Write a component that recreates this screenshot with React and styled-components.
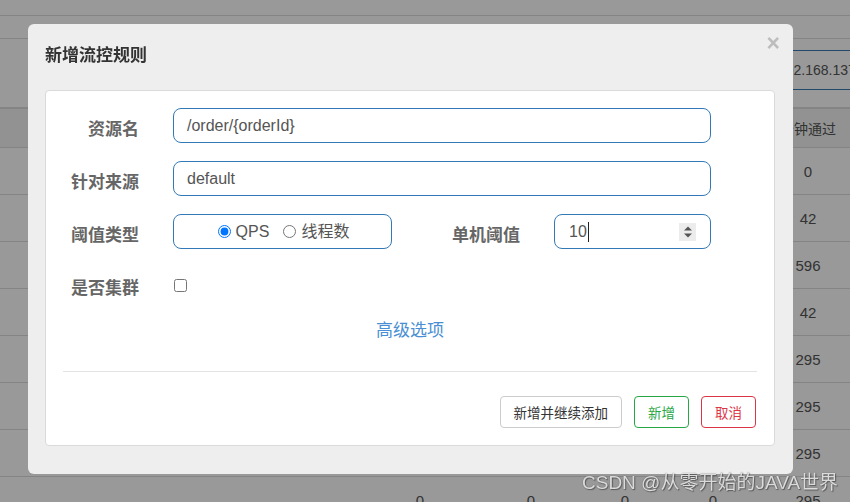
import React from 'react';
import styled, {createGlobalStyle} from 'styled-components';

const GlobalStyle = createGlobalStyle`
  * {
    box-sizing: border-box;
  }
  body {
    margin: 0;
    width: 850px;
    height: 502px;
    overflow: hidden;
    background: #fff;
    font-family: "Liberation Sans", "Noto Sans CJK SC", sans-serif;
    color: #333;
  }
`;

const rightValues = ['0', '42', '596', '42', '295', '295', '295', '295', '295'];

export default function App() {
  return (
    <>
      <GlobalStyle />
      <Page>
        <TopStrip />
        <SubStrip />
        <Toolbar>
          <HostBox>192.168.137.1:8720</HostBox>
        </Toolbar>
        <Table>
          <HeadRow>
            <Cell />
            <Cell>通过QPS</Cell>
            <Cell>拒绝QPS</Cell>
            <Cell>并发数</Cell>
            <Cell>平均RT</Cell>
            <Cell>分钟通过</Cell>
          </HeadRow>
          {rightValues.map((v, i) => (
            <Row key={i}>
              <Cell />
              <Cell>0</Cell>
              <Cell>0</Cell>
              <Cell>0</Cell>
              <Cell>0</Cell>
              <Cell>{v}</Cell>
            </Row>
          ))}
        </Table>
      </Page>

      <Backdrop />

      <Modal>
        <ModalHeader>
          <Title>新增流控规则</Title>
          <CloseButton>×</CloseButton>
        </ModalHeader>
        <Panel>
          <FormRow>
            <FieldLabel>资源名</FieldLabel>
            <TextInput defaultValue="/order/{orderId}" />
          </FormRow>
          <FormRow>
            <FieldLabel>针对来源</FieldLabel>
            <TextInput defaultValue="default" />
          </FormRow>
          <FormRow>
            <FieldLabel>阈值类型</FieldLabel>
            <RadioBox>
              <RadioItem>
                <input type="radio" name="grade" defaultChecked />
                QPS
              </RadioItem>
              <RadioItem>
                <input type="radio" name="grade" />
                线程数
              </RadioItem>
            </RadioBox>
            <FieldLabel $offset>单机阈值</FieldLabel>
            <NumberBox>
              <span>10</span>
              <Caret />
              <Spinner>
                <svg width="10" height="14" viewBox="0 0 10 14">
                  <path d="M1 5.5 L5 1.5 L9 5.5 Z" fill="#555" />
                  <path d="M1 8.5 L5 12.5 L9 8.5 Z" fill="#555" />
                </svg>
              </Spinner>
            </NumberBox>
          </FormRow>
          <FormRow>
            <FieldLabel>是否集群</FieldLabel>
            <Checkbox type="checkbox" />
          </FormRow>
          <AdvancedLink>高级选项</AdvancedLink>
          <Divider />
          <Footer>
            <ActionButton>新增并继续添加</ActionButton>
            <ActionButton $tone="#28a745">新增</ActionButton>
            <ActionButton $tone="#dc3545">取消</ActionButton>
          </Footer>
        </Panel>
      </Modal>

      <Watermark>CSDN @从零开始的JAVA世界</Watermark>
    </>
  );
}

const Page = styled.div`
  width: 850px;
  height: 502px;
  overflow: hidden;
`;

const TopStrip = styled.div`
  height: 16px;
  border-bottom: 1px solid #dcdcdc;
`;

const SubStrip = styled.div`
  height: 23px;
  border-bottom: 1px solid #dcdcdc;
`;

const Toolbar = styled.div`
  display: flex;
  height: 68px;
  padding-top: 11px;
`;

const HostBox = styled.div`
  margin-left: 764px;
  flex: 0 0 200px;
  height: 40px;
  padding-left: 13px;
  border: 1px solid #3a7ab4;
  border-radius: 4px;
  font-size: 14px;
  line-height: 38px;
  color: #555;
  white-space: nowrap;
`;

const Table = styled.div`
  border-top: 2px solid #dcdcdc;
`;

const HeadRow = styled.div`
  display: grid;
  grid-template-columns: 370px 100px 122px 66px 110px 80px;
  height: 39px;
  border-bottom: 1px solid #dcdcdc;
  background: #f4f4f4;
  align-items: center;
  font-size: 14px;
  color: #555;
`;

const Row = styled.div`
  display: grid;
  grid-template-columns: 370px 100px 122px 66px 110px 80px;
  height: 47px;
  border-bottom: 1px solid #dcdcdc;
  align-items: center;
  font-size: 15px;
  color: #555;
`;

const Cell = styled.div`
  text-align: center;
  white-space: nowrap;
`;

const Backdrop = styled.div`
  position: fixed;
  inset: 0;
  background: rgba(0, 0, 0, 0.4);
`;

const Modal = styled.div`
  position: fixed;
  left: 28px;
  top: 24px;
  width: 765px;
  height: 450px;
  background: #eeeeee;
  border-radius: 6px;
  display: flex;
  flex-direction: column;
`;

const ModalHeader = styled.div`
  position: relative;
  padding: 19px 17px 25px;
`;

const Title = styled.h4`
  margin: 0;
  font-family: "Noto Sans CJK SC", sans-serif;
  font-size: 17px;
  font-weight: 700;
  line-height: 22px;
  color: #333;
`;

const CloseButton = styled.span`
  position: absolute;
  right: 13px;
  top: 8px;
  font-family: "Liberation Sans", sans-serif;
  font-size: 23px;
  font-weight: 700;
  line-height: 1;
  color: #bdbdbd;
`;

const Panel = styled.div`
  margin: 0 18px 0 17px;
  padding: 17px 17px 17px;
  background: #fff;
  border: 1px solid #dadada;
  border-radius: 4px;
  display: flex;
  flex-direction: column;
  gap: 18px;
`;

const FormRow = styled.div`
  display: flex;
  align-items: center;
  gap: 34px;
  height: 35px;
`;

const FieldLabel = styled.label`
  flex: 0 0 76px;
  margin-left: ${p => (p.$offset ? '18px' : '0')};
  padding-top: 5px;
  text-align: right;
  font-family: "Noto Sans CJK SC", sans-serif;
  font-size: 17px;
  font-weight: 700;
  line-height: 30px;
  color: #666;
  white-space: nowrap;
`;

const TextInput = styled.input`
  width: 538px;
  height: 35px;
  padding: 0 13px;
  border: 1px solid #3479b7;
  border-radius: 8px;
  outline: none;
  font-family: "Liberation Sans", sans-serif;
  font-size: 16px;
  color: #555;
  background: #fff;
`;

const RadioBox = styled.div`
  flex: 0 0 219px;
  height: 35px;
  border: 1px solid #3479b7;
  border-radius: 8px;
  display: flex;
  align-items: center;
  justify-content: center;
  gap: 14px;
  padding-left: 2px;
`;

const RadioItem = styled.label`
  display: flex;
  align-items: center;
  gap: 5px;
  font-family: "Liberation Sans", "Noto Sans CJK SC", sans-serif;
  font-size: 16px;
  line-height: 20px;
  color: #555;

  input {
    margin: 0;
    width: 13px;
    height: 13px;
  }
`;

const NumberBox = styled.div`
  flex: 0 0 157px;
  height: 35px;
  border: 1px solid #3479b7;
  border-radius: 8px;
  display: flex;
  align-items: center;
  padding: 0 14px;
  font-family: "Liberation Sans", sans-serif;
  font-size: 16px;
  color: #555;
`;

const Caret = styled.span`
  width: 1px;
  height: 20px;
  margin-left: 1px;
  background: #222;
`;

const Spinner = styled.span`
  margin-left: auto;
  width: 17px;
  height: 18px;
  background: #ececec;
  display: flex;
  align-items: center;
  justify-content: center;
`;

const Checkbox = styled.input`
  margin: 2px 0 0 1px;
  width: 13px;
  height: 13px;
`;

const AdvancedLink = styled.a`
  margin-top: -3px;
  text-align: center;
  font-family: "Noto Sans CJK SC", sans-serif;
  font-size: 17px;
  line-height: 24px;
  color: #4a8fd3;
`;

const Divider = styled.div`
  margin-top: 12px;
  height: 1px;
  background: #e3e3e3;
`;

const Footer = styled.div`
  margin-top: 6px;
  display: flex;
  justify-content: flex-end;
  gap: 12px;
  padding-right: 1px;
`;

const ActionButton = styled.button`
  height: 32px;
  padding: 0 13px;
  background: #fff;
  border: 1px solid ${p => p.$tone || '#cccccc'};
  border-radius: 4px;
  font-family: "Noto Sans CJK SC", sans-serif;
  font-size: 13.5px;
  color: ${p => p.$tone || '#333'};
`;

const Watermark = styled.div`
  position: fixed;
  left: 582px;
  top: 471px;
  font-family: "Liberation Sans", "Noto Sans CJK SC", sans-serif;
  font-size: 19px;
  line-height: 24px;
  color: rgba(245, 245, 245, 0.85);
  text-shadow: 0 0 1px rgba(40, 40, 40, 0.7), 1px 1px 1px rgba(40, 40, 40, 0.5);
  white-space: nowrap;
`;
